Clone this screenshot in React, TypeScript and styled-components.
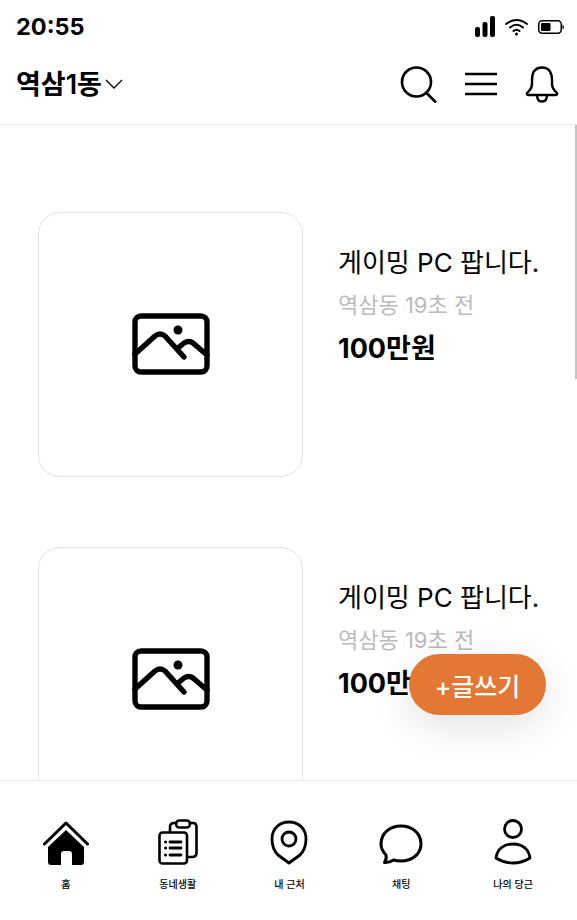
import styled, { createGlobalStyle } from "styled-components";

const GlobalStyle = createGlobalStyle`
  * {
    box-sizing: border-box;
  }

  html, body {
    margin: 0;
    padding: 0;
    background: #fff;
    overflow: hidden;
  }

  body {
    font-family: Inter, "Noto Sans CJK KR", sans-serif;
    color: #000;
  }
`

const Screen = styled.div`
  position: relative;
  display: flex;
  flex-direction: column;
  width: 577px;
  height: 920px;
  overflow: hidden;
`

const StatusBar = styled.div`
  display: flex;
  align-items: center;
  justify-content: space-between;
  height: 52px;
  padding: 2px 13px 0 16px;
  flex-shrink: 0;
`

const Clock = styled.span`
  font-size: 23.5px;
  font-weight: 700;
  line-height: 1;
`

const StatusIcons = styled.div`
  display: flex;
  align-items: center;
  gap: 10px;
`

const Header = styled.header`
  display: flex;
  align-items: center;
  justify-content: space-between;
  height: 73px;
  padding: 0 18px 8px 16px;
  border-bottom: 1px solid #e8e8e8;
  flex-shrink: 0;
`

const Location = styled.div`
  display: flex;
  align-items: center;
  gap: 2px;
`

const LocationName = styled.span`
  font-size: 27px;
  font-weight: 600;
  line-height: 1;
`

const HeaderActions = styled.div`
  display: flex;
  align-items: center;
  gap: 28px;
`

const Feed = styled.main`
  flex: 1;
  display: flex;
  flex-direction: column;
  gap: 70px;
  padding: 87px 0 0 38px;
  overflow: hidden;
`

const Item = styled.article`
  display: flex;
  align-items: flex-start;
  gap: 35px;
  flex-shrink: 0;
`

const Thumb = styled.div`
  display: flex;
  align-items: center;
  justify-content: center;
  width: 265px;
  height: 265px;
  padding-bottom: 1px;
  border: 1px solid #e3e3e3;
  border-radius: 22px;
`

const ItemInfo = styled.div`
  display: flex;
  flex-direction: column;
  gap: 11px;
  padding-top: 35px;
`

const ItemTitle = styled.h3`
  margin: 0;
  font-size: 26px;
  font-weight: 400;
  line-height: 32px;
  white-space: nowrap;
`

const ItemMeta = styled.span`
  font-size: 22px;
  color: #bbbbbb;
  line-height: 30px;
  white-space: nowrap;
`

const ItemPrice = styled.strong`
  margin-top: 2px;
  font-size: 27px;
  font-weight: 700;
  line-height: 32px;
  white-space: nowrap;
`

const WriteButton = styled.button`
  position: absolute;
  left: 409px;
  top: 654px;
  width: 137px;
  height: 61px;
  border: 0;
  border-radius: 31px;
  background: #e27834;
  color: #fff;
  font-family: inherit;
  font-size: 25px;
  font-weight: 500;
  box-shadow: 0 10px 40px rgba(0, 0, 0, 0.12);
`

const Scrollbar = styled.div`
  position: absolute;
  right: 0;
  top: 125px;
  width: 2px;
  height: 254px;
  background: #c4c4c4;
`

const TabBar = styled.nav`
  display: grid;
  grid-template-columns: repeat(5, 1fr);
  height: 140px;
  padding: 36px 8px 0 10px;
  border-top: 1px solid #e8e8e8;
  background: #fff;
  flex-shrink: 0;
`

const Tab = styled.div`
  display: flex;
  flex-direction: column;
  align-items: center;
  gap: 13px;
`

const TabIcon = styled.div`
  display: flex;
  align-items: flex-end;
  justify-content: center;
  height: 48px;
`

const TabLabel = styled.span`
  font-size: 10px;
  font-weight: 500;
  line-height: 13px;
  white-space: nowrap;
`

function PictureIcon() {
  return (
    <svg width="78" height="62" viewBox="0 0 78 62" fill="none" stroke="#000" strokeWidth="5.400" strokeLinecap="round" strokeLinejoin="round">
      <rect x="3" y="3" width="72" height="56" rx="6" />
      <path d="M3 41 L23 23 Q28 19 33 23 L52 44" />
      <path d="M46 35 L52 30 Q57 27 61 30 L75 42" />
      <circle cx="46" cy="17" r="4.500" fill="#000" stroke="none" />
    </svg>
  )
}

const tabs = [
  {
    label: "홈",
    icon: (
      <svg width="46" height="44" viewBox="0 0 46 44">
        <path d="M1.500 23 L23 2 L44.500 23" fill="none" stroke="#000" strokeWidth="3" strokeLinecap="round" strokeLinejoin="round" />
        <path d="M23 9 L41 26 V41 Q41 44 38 44 H29 V33 Q29 30 26 30 H21 Q18 30 18 33 V44 H8 Q5 44 5 41 V26 Z" fill="#000" />
      </svg>
    ),
  },
  {
    label: "동네생활",
    icon: (
      <svg width="40" height="46" viewBox="0 0 40 46" fill="none" stroke="#000" strokeWidth="2.600" strokeLinecap="round" strokeLinejoin="round">
        <path d="M12 13 V8 Q12 4 16 4 H18 M32 4 H35 Q38.500 4 38.500 8 V34 Q38.500 38 34 38 H29" />
        <rect x="18" y="1.500" width="14" height="7" rx="3.500" />
        <rect x="1.500" y="13.500" width="27.500" height="31" rx="3" fill="#fff" />
        <path d="M12 23 H23 M12 29 H23 M12 36 H23" strokeWidth="2.800" />
        <path d="M7.500 23 H7.600 M7.500 29 H7.600 M7.500 36 H7.600" strokeWidth="3" />
      </svg>
    ),
  },
  {
    label: "내 근처",
    icon: (
      <svg width="38" height="46" viewBox="0 0 38 46" fill="none" stroke="#000" strokeWidth="2.800" strokeLinejoin="round">
        <path d="M19 44 L8 36 Q2 30 2 20 C2 9 10 3 19 3 C28 3 36 9 36 20 Q36 30 30 36 Z" />
        <circle cx="19" cy="20" r="7" />
      </svg>
    ),
  },
  {
    label: "채팅",
    icon: (
      <svg width="44" height="41" viewBox="0 0 44 41" fill="none" stroke="#000" strokeWidth="3" strokeLinejoin="round">
        <path d="M22 2 C33 2 42 9 42 20 C42 30 33 37 22 37 Q18 37 14.500 36 Q10 39 5.500 38.500 Q8 35 7 31 Q2 26 2 20 C2 9 11 2 22 2 Z" />
      </svg>
    ),
  },
  {
    label: "나의 당근",
    icon: (
      <svg width="38" height="46" viewBox="0 0 38 46" fill="none" stroke="#000" strokeWidth="2.800" strokeLinejoin="round">
        <circle cx="19" cy="10" r="8.500" />
        <path d="M2 39 C3 30 10 25 19 25 C28 25 35 30 36 39 Q28 44 19 44 Q10 44 2 39 Z" />
      </svg>
    ),
  },
]

export default function App() {
  return (
    <Screen>
      <GlobalStyle />
      <StatusBar>
        <Clock>20:55</Clock>
        <StatusIcons>
          <svg width="20" height="22" viewBox="0 0 20 22" fill="#000">
            <rect x="0" y="11" width="5" height="10" rx="2" />
            <rect x="7.500" y="6" width="5" height="15" rx="2" />
            <rect x="15" y="0" width="5" height="21" rx="2" />
          </svg>
          <svg width="23" height="18" viewBox="0 0 23 18" fill="none" stroke="#000" strokeWidth="2" strokeLinecap="round">
            <path d="M1 6 Q11.500 -2 22 6" />
            <path d="M5 9.500 Q11.500 4 18 9.500" />
            <path d="M8.500 13 Q11.500 10.500 14.500 13" />
            <circle cx="11.500" cy="16" r="1.500" fill="#000" stroke="none" />
          </svg>
          <svg width="26" height="14" viewBox="0 0 26 14" fill="none">
            <rect x="0.750" y="0.750" width="22.500" height="12.500" rx="3.500" stroke="#000" strokeWidth="1.500" />
            <rect x="3" y="3" width="9.500" height="8" rx="1" fill="#000" />
            <path d="M24.500 4.500 Q26 5.500 26 7 Q26 8.500 24.500 9.500 Z" fill="#000" />
          </svg>
        </StatusIcons>
      </StatusBar>

      <Header>
        <Location>
          <LocationName>역삼1동</LocationName>
          <svg width="20" height="12" viewBox="0 0 20 12" fill="none" stroke="#000" strokeWidth="1.300">
            <path d="M2 2 L10 10 L18 2" />
          </svg>
        </Location>
        <HeaderActions>
          <svg width="37" height="37" viewBox="0 0 37 37" fill="none" stroke="#000" strokeWidth="2.600">
            <circle cx="16.500" cy="16" r="14.500" />
            <path d="M25.500 26 L36 36.500" />
          </svg>
          <svg width="32" height="24" viewBox="0 0 32 24" fill="none" stroke="#000" strokeWidth="2.600">
            <path d="M0 2 H32 M0 12 H32 M0 22 H32" />
          </svg>
          <svg width="34" height="37" viewBox="0 0 34 37" fill="none" stroke="#000" strokeWidth="2.400" strokeLinejoin="round">
            <path d="M17 1.500 C9 1.500 7 8 7 14 V18 Q7 22 4 25 L2 27 Q1.500 29 3.500 29 H30.500 Q32.500 29 32 27 L30 25 Q27 22 27 18 V14 C27 8 25 1.500 17 1.500 Z" />
            <path d="M12 29 Q12 35.500 17 35.500 Q22 35.500 22 29" />
          </svg>
        </HeaderActions>
      </Header>

      <Feed>
        {[0, 1].map((key) => (
          <Item key={key}>
            <Thumb>
              <PictureIcon />
            </Thumb>
            <ItemInfo>
              <ItemTitle>게이밍 PC 팝니다.</ItemTitle>
              <ItemMeta>역삼동 19초 전</ItemMeta>
              <ItemPrice>100만원</ItemPrice>
            </ItemInfo>
          </Item>
        ))}
      </Feed>

      <TabBar>
        {tabs.map((tab) => (
          <Tab key={tab.label}>
            <TabIcon>{tab.icon}</TabIcon>
            <TabLabel>{tab.label}</TabLabel>
          </Tab>
        ))}
      </TabBar>

      <WriteButton>+글쓰기</WriteButton>
      <Scrollbar />
    </Screen>
  )
}
